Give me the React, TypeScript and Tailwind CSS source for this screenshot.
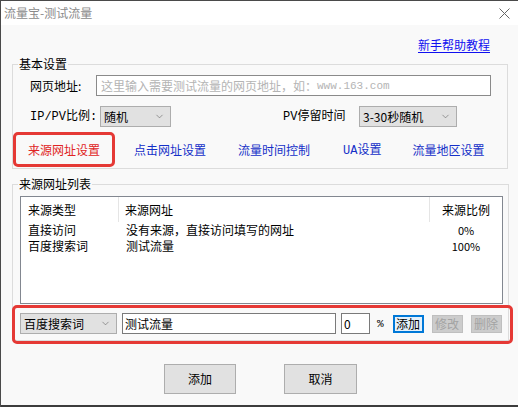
import { ChevronDown } from "lucide-react";

const cjk = "font-['Noto_Sans_CJK_SC','Noto_Sans',sans-serif]";
const mono = "font-['Liberation_Mono','Noto_Sans_CJK_SC',monospace]";

const sources = [
  { type: "直接访问", url: "没有来源，直接访问填写的网址", ratio: "0%" },
  { type: "百度搜索词", url: "测试流量", ratio: "100%" },
];

function Combo({ value, width }: { value: string; width: string }) {
  return (
    <div
      className={`${width} h-[21px] flex items-center justify-between pl-[3px] pr-[5px] bg-[#e1e1e1] border border-[#adadad] text-[12px] text-black`}
    >
      <span>{value}</span>
      <ChevronDown size={11} strokeWidth={1.2} className="text-[#555]" />
    </div>
  );
}

function SmallButton({ label, active }: { label: string; active?: boolean }) {
  return (
    <button
      className={
        active
          ? "w-[31px] h-[18px] flex items-center justify-center border-2 border-[#0078d7] bg-[#e5f1fb] text-[12px] text-black leading-none"
          : "w-[31px] h-[18px] flex items-center justify-center border border-[#bfbfbf] bg-[#cccccc] text-[12px] text-[#a3a3a3] leading-none"
      }
    >
      {label}
    </button>
  );
}

export default function App() {
  return (
    <div
      className={`w-[518px] h-[407px] flex flex-col bg-[#f9f9f9] border-t border-l border-[#4a4a4a] ${cjk} text-[12px] leading-4 text-black overflow-hidden`}
    >
      {/* title bar */}
      <div className="h-[24px] shrink-0 bg-white flex items-center justify-between pl-[3px] pr-[8px]">
        <span className="text-[12px] text-[#8a8a8a]">流量宝-测试流量</span>
        <svg width="11" height="11" viewBox="0 0 11 11">
          <path d="M0.5 0.5 L10.5 10.5 M10.5 0.5 L0.5 10.5" stroke="#666" strokeWidth="1" />
        </svg>
      </div>

      <div className="flex-1 flex flex-col pt-[12px]">
        <div className="flex justify-end pr-[28px] h-4">
          <a className="text-[#1010f0] underline underline-offset-2 cursor-pointer">新手帮助教程</a>
        </div>

        {/* 基本设置 */}
        <fieldset className="mt-[3px] ml-[11px] mr-[10px] border border-[#dcdcdc] px-0 pb-[1px]">
          <legend className="ml-[5px] px-[1px] text-[12px] leading-4">基本设置</legend>
          <div className="flex items-center pl-[17px] mt-[3px]">
            <span className="w-[66px]">网页地址:</span>
            <div className="w-[395px] h-[21px] bg-white border border-[#8a8a8a] flex items-center pl-[4px] text-[#b4b4b4] whitespace-nowrap">
              这里输入需要测试流量的网页地址，如：<span className={`${mono} text-[11px]`}>www.163.com</span>
            </div>
          </div>
          <div className="flex items-center pl-[17px] mt-[10px]">
            <span className={`w-[70px] ${mono} text-[12px]`}>IP/PV比例:</span>
            <Combo value="随机" width="w-[71px]" />
            <span className={`ml-[112px] w-[76px] ${mono} text-[12px]`}>PV停留时间</span>
            <Combo value="3-30秒随机" width="w-[98px]" />
          </div>
          <div className="flex items-center mt-[5px]">
            <span className="w-[102px] h-[35px] flex items-center pl-[12px] border-[3px] border-[#e53935] rounded-[5px] text-[#e02424]">
              来源网址设置
            </span>
            <span className="ml-[19px] text-[#1530c8]">点击网址设置</span>
            <span className="ml-[32px] text-[#1530c8]">流量时间控制</span>
            <span className="ml-[33px] text-[#1530c8]">
              <span className={`${mono} text-[12px]`}>UA</span>设置
            </span>
            <span className="ml-[31px] text-[#1530c8]">流量地区设置</span>
          </div>
        </fieldset>

        {/* 来源网址列表 */}
        <fieldset className="relative mt-[7px] ml-[11px] mr-[9px] border border-[#dcdcdc] px-0 pb-[6px]">
          <legend className="ml-[5px] px-[1px] text-[12px] leading-4">来源网址列表</legend>
          <div className="mt-[4px] ml-[7px] mr-[5px] h-[108px] bg-white border border-[#828790]">
            <div className="flex h-[25px] items-center">
              <span className="w-[98px] h-full flex items-center pl-[7px] border-r border-[#e5e5e5]">来源类型</span>
              <span className="w-[311px] h-full flex items-center pl-[6px] border-r border-[#e5e5e5]">来源网址</span>
              <span className="flex-1 text-center">来源比例</span>
            </div>
            {sources.map((s) => (
              <div key={s.type} className="flex h-[16px] items-center">
                <span className="w-[98px] pl-[7px]">{s.type}</span>
                <span className="w-[311px] pl-[7px]">{s.url}</span>
                <span className="flex-1 text-center text-[11px]">{s.ratio}</span>
              </div>
            ))}
          </div>

          <div className="flex items-center mt-[9px] ml-[7px]">
            <Combo value="百度搜索词" width="w-[97px]" />
            <div className="ml-[5px] w-[214px] h-[21px] bg-white border border-[#7a7a7a] flex items-center pl-[2px]">
              测试流量
            </div>
            <div className="ml-[5px] w-[29px] h-[21px] bg-white border border-[#7a7a7a] flex items-center pl-[2px]">
              0
            </div>
            <span className={`ml-[7px] ${mono} text-[11px]`}>%</span>
            <div className="ml-[9px] flex items-center gap-[8px]">
              <SmallButton label="添加" active />
              <SmallButton label="修改" />
              <SmallButton label="删除" />
            </div>
          </div>

          <div className="absolute left-[-1px] right-[-5px] bottom-[-4px] h-[39px] border-[3px] border-[#e53935] rounded-[5px] pointer-events-none" />
        </fieldset>

        <div className="flex mt-[23px] ml-[163px] gap-[48px]">
          <button className="w-[72px] h-[30px] bg-[#e1e1e1] border border-[#adadad]">添加</button>
          <button className="w-[73px] h-[30px] bg-[#e1e1e1] border border-[#adadad]">取消</button>
        </div>
      </div>

      <div className="h-[2px] shrink-0 bg-[#3c3c3c]" />
    </div>
  );
}
